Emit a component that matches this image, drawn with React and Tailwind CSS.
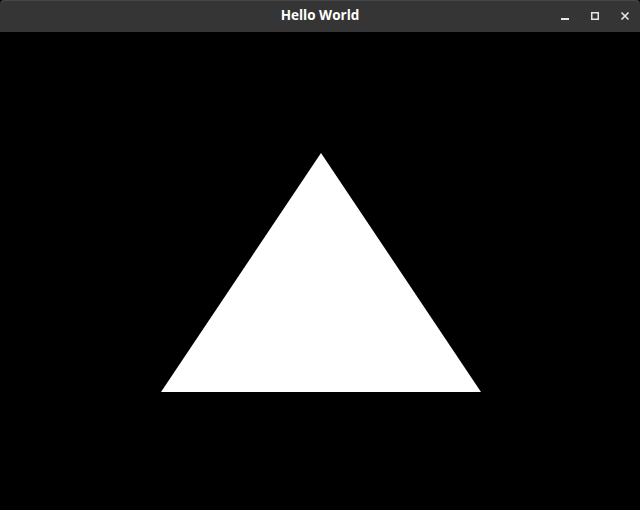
import React from 'react';

const TitleButton = ({ children }) => (
    <div className="w-[30px] h-[32px] flex items-center justify-center">
        {children}
    </div>
);

export default function App() {
    return (
        <div className="w-[640px] h-[510px] bg-black flex flex-col overflow-hidden">
            {/* Title bar */}
            <header className="relative h-[32px] shrink-0 bg-[#353535] rounded-t-[4px] border-t border-[#474747] flex items-center justify-center">
                <span
                    className="text-[13.5px] font-bold text-white leading-none mb-[2px]"
                    style={{ fontFamily: '"Open Sans", "Noto Sans", sans-serif' }}
                >
                    Hello World
                </span>
                <div className="absolute right-[0px] top-[-1px] flex items-center">
                    <TitleButton>
                        <svg width="10" height="10" viewBox="0 0 10 10">
                            <rect x="1" y="7" width="8" height="2" fill="#e6e6e6" />
                        </svg>
                    </TitleButton>
                    <TitleButton>
                        <svg width="10" height="10" viewBox="0 0 10 10">
                            <rect x="1.75" y="1.75" width="6.5" height="6.5" fill="none" stroke="#e6e6e6" strokeWidth="1.5" />
                        </svg>
                    </TitleButton>
                    <TitleButton>
                        <svg width="10" height="10" viewBox="0 0 10 10">
                            <path d="M1.5 1.5 L8.5 8.5 M8.5 1.5 L1.5 8.5" stroke="#e6e6e6" strokeWidth="1.6" />
                        </svg>
                    </TitleButton>
                </div>
            </header>

            {/* Canvas */}
            <main className="flex-1 bg-black">
                <svg width="640" height="478" viewBox="0 32 640 478">
                    <polygon points="321,153 161,392 481,392" fill="#ffffff" />
                </svg>
            </main>
        </div>
    );
}
